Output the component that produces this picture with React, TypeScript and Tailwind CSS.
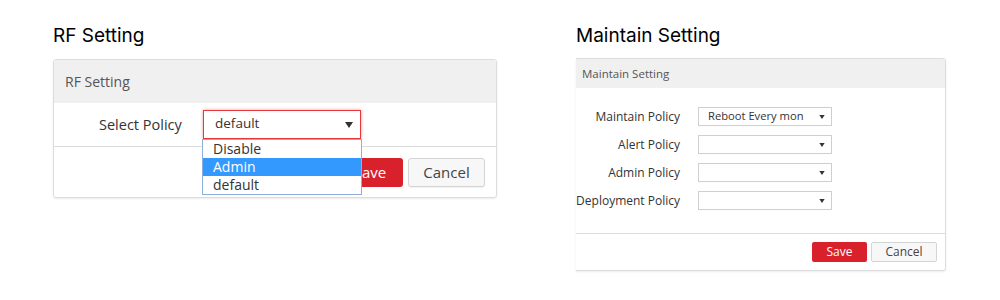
import React from "react";

const bodyFont = "font-['Open_Sans','Noto_Sans',sans-serif]";
const titleCls = "font-['Inter',sans-serif] font-normal text-[19px] leading-[22px] text-black";

function Caret({ className = "" }: { className?: string }) {
  return (
    <svg viewBox="0 0 8 6" className={className} fill="currentColor">
      <path d="M0 0h8L4 6z" />
    </svg>
  );
}

const RfSetting: React.FC = () => {
  const options = ["Disable", "Admin", "default"];
  return (
    <div className="w-[444px]">
      <h2 className={`h-[34px] ${titleCls}`}>RF Setting</h2>
      <div className={`border border-[#dcdcdc] rounded-[3px] shadow-[0_1px_2px_rgba(0,0,0,0.08)] ${bodyFont}`}>
        <div className="h-[43px] bg-[#f0f0f0] px-[11px] flex items-center text-[14px] text-[#555]">RF Setting</div>
        <div className="h-[44px] flex items-center border-b border-[#dcdcdc]">
          <span className="ml-[45px] w-[104px] text-[14.5px] text-[#333]">Select Policy</span>
          <div className="relative">
            <div className="w-[158px] h-[29px] border border-[#e8363a] shadow-[0_0_3px_rgba(232,54,58,0.5)] flex items-center justify-between pl-[11px] pr-[7px] text-[13.5px] text-[#333] bg-white">
              <span className="-mt-[2px]">default</span>
              <Caret className="w-[8px] h-[6px] text-[#333]" />
            </div>
            <ul className="absolute left-[-1px] top-[29px] z-10 w-[160px] border border-[#8eaedb] bg-white text-[14px] leading-[18px] text-[#333]">
              {options.map((o) => (
                <li key={o} className={`pl-[10px] ${o === "Admin" ? "bg-[#3399ff] text-white" : ""}`}>{o}</li>
              ))}
            </ul>
          </div>
        </div>
        <div className="h-[50px] flex items-center justify-end gap-[5px] pr-[11px]">
          <button className="w-[66px] h-[29px] rounded-[3px] bg-[#d9212c] text-white text-[15px]">Save</button>
          <button className="w-[77px] h-[29px] rounded-[3px] border border-[#d4d4d4] bg-[#f7f7f7] text-[#444] text-[15px] shadow-[0_1px_1px_rgba(0,0,0,0.06)]">Cancel</button>
        </div>
      </div>
    </div>
  );
};

const MaintainSetting: React.FC = () => {
  const rows = [
    { label: "Maintain Policy", value: "Reboot Every mon" },
    { label: "Alert Policy", value: "" },
    { label: "Admin Policy", value: "" },
    { label: "Deployment Policy", value: "" },
  ];
  return (
    <div className="w-[370px]">
      <h2 className={`h-[33px] ${titleCls}`}>Maintain Setting</h2>
      <div className={`border border-l-0 border-[#dcdcdc] rounded-r-[3px] shadow-[0_1px_2px_rgba(0,0,0,0.08)] ${bodyFont}`}>
        <div className="h-[29px] bg-[#f0f0f0] pl-[6px] flex items-center text-[11.5px] text-[#555]">Maintain Setting</div>
        <div className="h-[146px] border-b border-[#dcdcdc] pt-[19px] flex flex-col gap-[9px]">
          {rows.map((r) => (
            <div key={r.label} className="flex items-center h-[19px]">
              <span className="w-[104px] text-right text-[12px] text-[#333] whitespace-nowrap">{r.label}</span>
              <div className="ml-[18px] w-[134px] h-[19px] border border-[#cfcfcf] flex items-center justify-between pl-[9px] pr-[6px] text-[11.2px] text-[#333]">
                <span>{r.value}</span>
                <Caret className="w-[6px] h-[4px] text-[#333]" />
              </div>
            </div>
          ))}
        </div>
        <div className="h-[36px] flex items-center justify-end gap-[4px] pr-[8px]">
          <button className="w-[55px] h-[20px] rounded-[2px] bg-[#d9212c] text-white text-[12px]">Save</button>
          <button className="w-[66px] h-[20px] rounded-[2px] border border-[#d4d4d4] bg-[#f7f7f7] text-[#444] text-[12px]">Cancel</button>
        </div>
      </div>
    </div>
  );
};

export default function App() {
  return (
    <div className="w-[1000px] h-[300px] bg-white flex pt-[25px] pl-[53px] gap-[79px]">
      <RfSetting />
      <MaintainSetting />
    </div>
  );
}
